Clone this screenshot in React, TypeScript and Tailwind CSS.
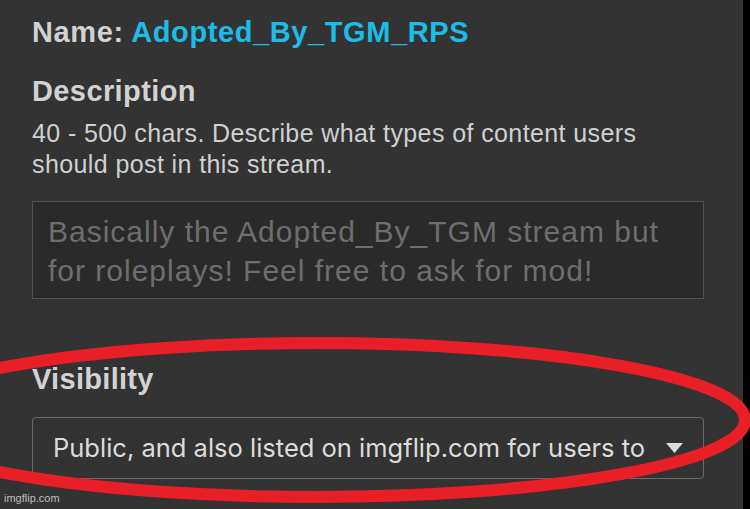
import React from 'react'

const helv = '"Liberation Sans", Arial, sans-serif'
const sysui = 'Inter, "Noto Sans", sans-serif'

function SelectArrow() {
  return (
    <svg width="17" height="10" viewBox="0 0 17 10" className="shrink-0">
      <polygon points="0,0 17,0 8.5,10" fill="#dcdcdc" />
    </svg>
  )
}

// red marker ring drawn over the visibility field
function Highlight() {
  return (
    <svg className="pointer-events-none absolute inset-0" width="750" height="509" viewBox="0 0 750 509">
      <ellipse cx="316" cy="420" rx="429" ry="77" fill="none" stroke="#e81f27" strokeWidth="12" />
    </svg>
  )
}

export default function App() {
  return (
    <div className="relative flex h-[509px] w-[750px] overflow-hidden bg-black" style={{ fontFamily: helv }}>
      <div className="flex w-[743px] flex-col bg-[#333333] pl-[32px] pr-[39px]">
        {/* name */}
        <div className="mt-[16px] whitespace-nowrap text-[29px] font-bold leading-[32px] tracking-[0.6px] text-[#d2d2d2]">
          Name: <span className="text-[#1bbde6]">Adopted_By_TGM_RPS</span>
        </div>

        {/* description */}
        <div className="mt-[27px] text-[29px] font-bold leading-[32px] tracking-[0.4px] text-[#d2d2d2]">Description</div>
        <div className="mt-[11px] whitespace-nowrap text-[25px] leading-[31px] tracking-[0.4px] text-[#d0d0d0]">
          40 - 500 chars. Describe what types of content users
          <br />
          should post in this stream.
        </div>
        <div className="mt-[21px] h-[98px] whitespace-nowrap border border-[#525252] bg-[#2a2a2a] px-[15px] pt-[10px] text-[30px] leading-[39px] tracking-[1px] text-[#6e6e6e]">
          Basically the Adopted_By_TGM stream but
          <br />
          for roleplays! Feel free to ask for mod!
        </div>

        {/* visibility */}
        <div className="mt-[64px] text-[29px] font-bold leading-[32px] tracking-[0.3px] text-[#d2d2d2]">Visibility</div>
        <div
          className="mt-[22px] flex h-[62px] items-center justify-between rounded-[4px] border-[1.5px] border-[#6a6a6a] pl-[20px] pr-[20px] text-[25.5px] text-[#dcdcdc]"
          style={{ fontFamily: sysui }}
        >
          <span className="whitespace-nowrap">Public, and also listed on imgflip.com for users to</span>
          <SelectArrow />
        </div>
      </div>
      <div className="absolute bottom-[3px] left-[4px] text-[11px] text-[#bdbdbd]" style={{ fontFamily: helv }}>
        imgflip.com
      </div>
      <Highlight />
    </div>
  )
}
